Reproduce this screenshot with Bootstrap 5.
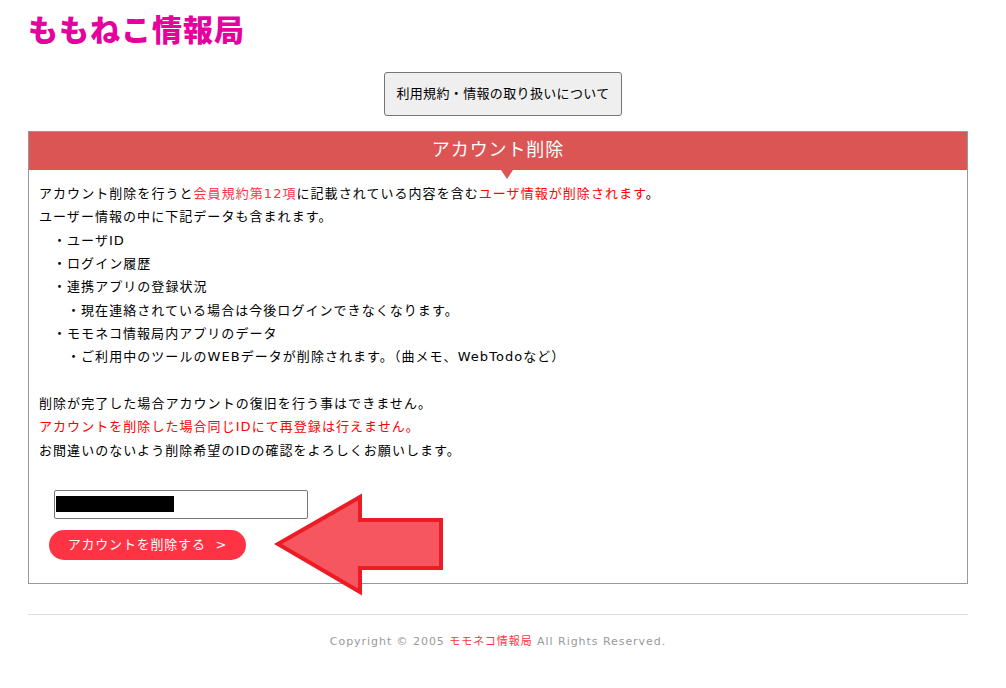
<!DOCTYPE html>
<html lang="ja">
<head>
  <meta charset="UTF-8">
  <title>アカウント削除</title>
  <meta name="viewport" content="width=device-width, initial-scale=1">
  <link href="https://cdn.jsdelivr.net/npm/bootstrap@5.3.0/dist/css/bootstrap.min.css" rel="stylesheet">
  <style>
    body { font-family: "DejaVu Sans", "Noto Sans CJK JP", sans-serif; font-size: 13px; color: #000; letter-spacing: 1.05px; }
    .page-wrap { width: 940px; margin-left: 28px; }
    .site-title { font-family: "Noto Sans CJK JP", sans-serif; font-size: 30px; font-weight: 900; color: #e6009e; line-height: 40px; letter-spacing: 1px; padding-top: 8px; margin: 0; }
    .terms-row { margin-top: 24px; margin-left: 356px; }
    .terms-btn { display: block; height: 44px; width: 238px; background: #efefef; border: 1px solid #767676; border-radius: 3px; color: #000; font-size: 13px; letter-spacing: .35px; padding: 0; }
    .del-panel { margin-top: 15px; height: 453px; border: 1px solid #999; border-radius: 0; }
    .del-head { position: relative; height: 38px; background: #dc5555; color: #fff; font-size: 18px; line-height: 36px; text-align: center; border: 0; padding: 0; letter-spacing: .9px; }
    .del-head:first-child { border-radius: 0; }
    .del-head::after { content: ""; position: absolute; left: 472px; top: 38px; border-style: solid; border-width: 9px 6px 0; border-color: #dc5555 transparent transparent; }
    .del-body { padding: 12px 10px 0; line-height: 23.35px; }
    .ind1 { padding-left: 14px; }
    .ind2 { padding-left: 28px; }
    .red-txt { color: #f00; }
    .red-soft { color: #ff3344; }
    .id-box { width: 254px; height: 29px; margin: 28px 0 0 25px; padding: 5px 1px; border: 1px solid #767676; border-radius: 2px; }
    .id-mask { display: block; width: 118px; height: 16px; background: #000; }
    .del-btn { display: block; width: 197px; height: 30px; margin: 11px 0 0 20px; padding: 0; background: #ff3344; color: #fff; border: 0; border-radius: 15px; font-size: 13px; letter-spacing: .8px; }
    .del-btn:hover { background: #ff3344; color: #fff; }
    .big-arrow { position: absolute; left: 273px; top: 492px; }
    .foot-line { margin: 30px 0 0; border: 0; border-top: 1px solid #ddd; opacity: 1; }
    .foot-txt { margin-top: 18px; text-align: center; font-size: 11px; color: #999; letter-spacing: .95px; line-height: 18px; }
  </style>
</head>
<body class="bg-white">

  <div class="page-wrap">
    <h1 class="site-title">ももねこ情報局</h1>

    <div class="terms-row">
      <button class="btn terms-btn">利用規約・情報の取り扱いについて</button>
    </div>

    <!-- 削除パネル -->
    <div class="card del-panel">
      <div class="card-header del-head">アカウント削除</div>
      <div class="del-body">
        <div>アカウント削除を行うと<span class="red-soft">会員規約第12項</span>に記載されている内容を含む<span class="red-txt">ユーザ情報が削除されます</span>。</div>
        <div>ユーザー情報の中に下記データも含まれます。</div>
        <div class="ind1">・ユーザID</div>
        <div class="ind1">・ログイン履歴</div>
        <div class="ind1">・連携アプリの登録状況</div>
        <div class="ind2">・現在連絡されている場合は今後ログインできなくなります。</div>
        <div class="ind1">・モモネコ情報局内アプリのデータ</div>
        <div class="ind2">・ご利用中のツールのWEBデータが削除されます。（曲メモ、WebTodoなど）</div>
        <div>&nbsp;</div>
        <div>削除が完了した場合アカウントの復旧を行う事はできません。</div>
        <div class="red-txt">アカウントを削除した場合同じIDにて再登録は行えません。</div>
        <div>お間違いのないよう削除希望のIDの確認をよろしくお願いします。</div>
      </div>
      <div class="id-box"><span class="id-mask"></span></div>
      <button class="btn del-btn">アカウントを削除する &nbsp;&gt;</button>
    </div>

    <hr class="foot-line">
    <div class="foot-txt">Copyright © 2005 <span class="red-soft">モモネコ情報局</span> All Rights Reserved.</div>
  </div>

  <!-- 注釈の矢印 -->
  <svg class="big-arrow" width="174" height="104" viewBox="273 492 174 104">
    <polygon points="278,544 360,497 360,520 441,520 441,568 360,568 360,592" fill="#f5565f" stroke="#ed1c24" stroke-width="4"/>
  </svg>

  <script src="https://cdn.jsdelivr.net/npm/bootstrap@5.3.0/dist/js/bootstrap.bundle.min.js"></script>
</body>
</html>
